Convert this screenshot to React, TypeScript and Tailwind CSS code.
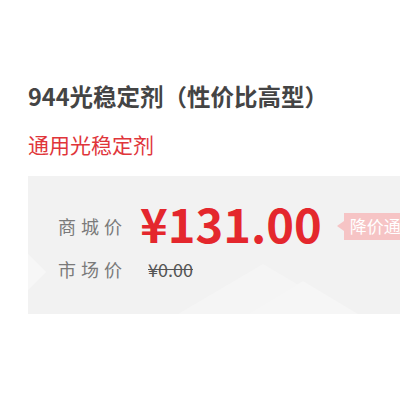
export default function App() {
  return (
    <div
      className="h-[400px] w-[400px] overflow-hidden bg-white pl-7 pt-[80px]"
      style={{ fontFamily: '"Noto Sans CJK SC", "Noto Sans", sans-serif' }}
    >
      <h1 className="text-[23.5px] font-bold leading-[32px] text-[#444]">
        944光稳定剂（性价比高型）
      </h1>
      <p className="mt-[18px] text-[21px] leading-[28px] text-[#e0353a]">通用光稳定剂</p>

      <div className="relative mt-[18px] h-[138px] w-[372px] overflow-hidden bg-[#f2f2f2]">
        <svg
          className="absolute inset-0"
          width="372"
          height="138"
          viewBox="0 0 372 138"
        >
          <polygon points="0,78 18,96 0,114" fill="#f7f7f7" />
          <polygon points="150,138 235,88 320,138" fill="#f5f5f5" />
          <polygon points="220,138 275,105 330,138" fill="#f6f6f6" />
        </svg>

        <div className="relative flex items-center pt-[22px]">
          <span className="w-[112px] shrink-0 pl-[30px] text-[18px] tracking-[5px] text-[#7a7a7a]">
            商城价
          </span>
          <span className="shrink-0 pb-[6px] text-[47px] font-bold leading-[50px] text-[#e4272d]">
            ¥131.00
          </span>
          <span className="relative ml-[22px] flex h-[27px] shrink-0 items-center whitespace-nowrap bg-[#f6c4c5] pl-[6px] text-[17px] text-white">
            <span className="absolute left-[-7px] top-[8px] h-0 w-0 border-y-[5px] border-r-[7px] border-y-transparent border-r-[#f6c4c5]" />
            降价通知
          </span>
        </div>

        <div className="relative mt-[2px] flex items-center">
          <span className="w-[120px] shrink-0 pl-[30px] text-[18px] tracking-[5px] text-[#7a7a7a]">
            市场价
          </span>
          <span className="text-[18px] text-[#555] line-through">¥0.00</span>
        </div>
      </div>
    </div>
  );
}
